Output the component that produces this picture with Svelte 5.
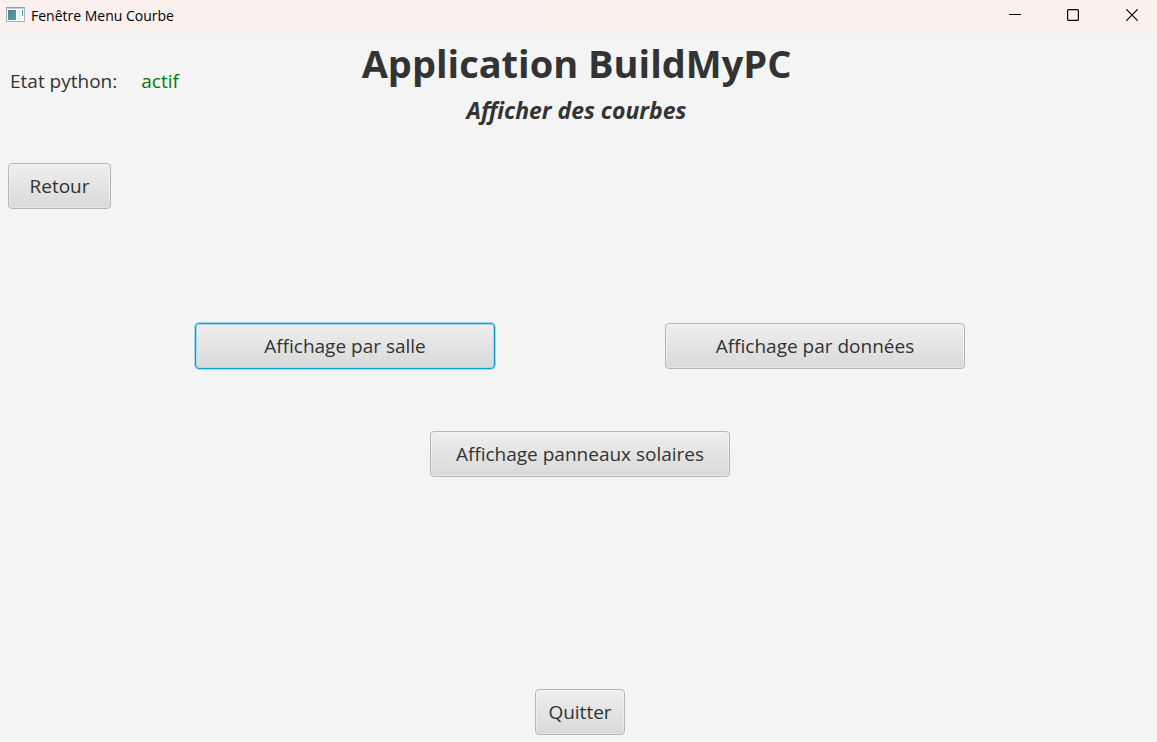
<script>
  const choices = ['Affichage par salle', 'Affichage par données', 'Affichage panneaux solaires'];
  let selected = $state(0);
</script>

<div class="window">
  <div class="titlebar">
    <svg class="app-icon" width="20" height="16" viewBox="0 0 20 16" aria-hidden="true">
      <defs>
        <linearGradient id="pane" x1="0" y1="0" x2="1" y2="1">
          <stop offset="0" stop-color="#4a74b4" />
          <stop offset="1" stop-color="#4fb07c" />
        </linearGradient>
        <linearGradient id="strip" x1="0" y1="0" x2="0" y2="1">
          <stop offset="0" stop-color="#3f78b8" />
          <stop offset="1" stop-color="#62bd83" />
        </linearGradient>
      </defs>
      <rect x="0.5" y="0.5" width="18" height="14" fill="#fdfdfe" stroke="#a9adb5" />
      <path d="M0 0.5H19" stroke="#989fa9" />
      <path d="M1 1.5H18" stroke="#c5cbd3" />
      <rect x="2" y="3" width="8" height="10" fill="url(#pane)" />
      <rect x="11" y="3" width="4" height="10" fill="#eceff2" />
      <rect x="16" y="3" width="1" height="6" fill="url(#strip)" />
    </svg>
    <span class="caption">Fenêtre Menu Courbe</span>
    <div class="controls">
      <button aria-label="Réduire">
        <svg width="12" height="12" viewBox="0 0 12 12"><path d="M0 5.5H12" stroke="#000" /></svg>
      </button>
      <button aria-label="Agrandir">
        <svg width="12" height="12" viewBox="0 0 12 12"><rect x="0.6" y="0.6" width="10.8" height="10.8" rx="1" fill="none" stroke="#000" stroke-width="1.2" /></svg>
      </button>
      <button aria-label="Fermer">
        <svg width="12" height="12" viewBox="0 0 12 12"><path d="M0.3 0.3L11.7 11.7M11.7 0.3L0.3 11.7" stroke="#000" stroke-width="1.2" /></svg>
      </button>
    </div>
  </div>

  <header>
    <p class="status"><span>Etat python:</span><span class="active">actif</span></p>
    <div class="titles">
      <h1>Application BuildMyPC</h1>
      <h2>Afficher des courbes</h2>
    </div>
  </header>

  <main>
    <button class="btn back">Retour</button>
    <div class="menu">
      {#each choices as choice, i}
        <button class="btn choice" class:selected={selected === i} onclick={() => (selected = i)}>{choice}</button>
      {/each}
    </div>
    <button class="btn quit">Quitter</button>
  </main>
</div>

<style>
  :global(body) {
    margin: 0;
  }

  .window {
    display: flex;
    flex-direction: column;
    min-height: 100vh;
    background: #f4f4f4;
    color: #333;
    font-family: 'Open Sans', 'Noto Sans', sans-serif;
    font-size: 19px;
    line-height: 28px;
  }

  .titlebar {
    display: flex;
    align-items: center;
    height: 34px;
    padding-left: 6px;
    background: linear-gradient(90deg, #faf0ef, #f9f1ea);
    color: #000;
    font-size: 14px;
    line-height: 30px;
  }

  .app-icon {
    margin-bottom: 4px;
  }

  .caption {
    margin: 0 auto 2px 5px;
  }

  .controls {
    display: flex;
    align-self: stretch;
  }

  .controls button {
    display: flex;
    justify-content: center;
    align-items: center;
    width: 58px;
    padding: 0 0 4px;
    border: 0;
    background: none;
  }

  .controls button:last-child {
    width: 50px;
    margin-left: 5px;
  }

  header {
    display: grid;
    grid-template-columns: 1fr auto 1fr;
    padding: 1px 14px 0 10px;
  }

  .status {
    display: flex;
    gap: 24px;
    margin: 32px 0 0;
  }

  .active {
    color: #008000;
  }

  .titles {
    text-align: center;
  }

  h1,
  h2 {
    margin: 0;
    font-weight: 700;
  }

  h1 {
    font-size: 38px;
    line-height: 56px;
  }

  h2 {
    font-size: 23px;
    line-height: 38px;
    font-style: italic;
  }

  main {
    display: flex;
    flex: 1;
    flex-direction: column;
    align-items: center;
    padding: 34px 5px 7px 8px;
  }

  .btn {
    height: 46px;
    padding: 0 12px;
    border: 1px solid #b5b5b5;
    border-radius: 4px;
    background: linear-gradient(#efefef, #d9d9d9);
    box-shadow: inset 0 0 0 1px rgba(255, 255, 255, 0.4);
    color: #333;
    font: inherit;
  }

  .back {
    align-self: flex-start;
    min-width: 103px;
  }

  .menu {
    display: flex;
    flex-wrap: wrap;
    justify-content: center;
    gap: 62px 170px;
    max-width: 770px;
    margin: 114px 0 62px;
  }

  .choice {
    width: 300px;
  }

  .selected {
    border-color: #039ed3;
    box-shadow:
      0 0 0 1px #a6d9ea,
      inset 0 0 0 1px #a6d9ea;
  }

  .quit {
    min-width: 90px;
    margin-top: auto;
  }
</style>
